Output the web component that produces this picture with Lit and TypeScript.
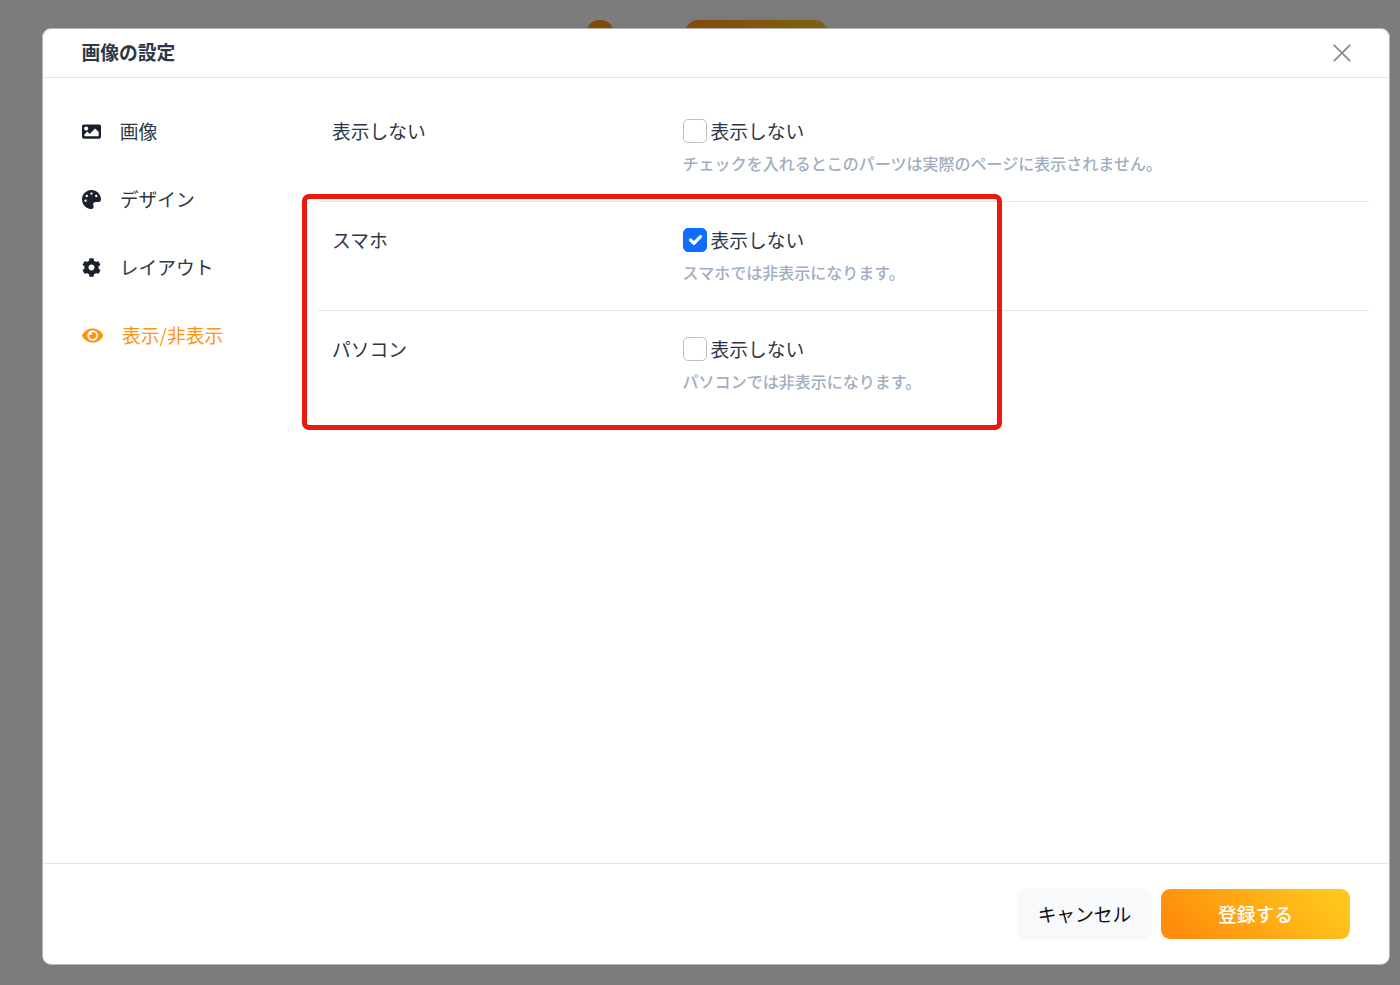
import { LitElement, html, css, svg } from "lit";
import { customElement, property, state } from "lit/decorators.js";
import { classMap } from "lit/directives/class-map.js";

interface NavItem {
  label: string;
  width: number;
  path: string;
  active?: boolean;
}

interface Setting {
  label: string;
  checked: boolean;
  help: string;
}

const NAV: NavItem[] = [
  {
    label: "画像",
    width: 512,
    path: "M464 448H48c-26.51 0-48-21.49-48-48V112c0-26.51 21.49-48 48-48h416c26.51 0 48 21.49 48 48v288c0 26.51-21.49 48-48 48zM112 120c-30.928 0-56 25.072-56 56s25.072 56 56 56 56-25.072 56-56-25.072-56-56-56zM64 384h384V272l-87.515-87.515c-4.686-4.686-12.284-4.686-16.971 0L208 320l-55.515-55.515c-4.686-4.686-12.284-4.686-16.971 0L64 336v48z",
  },
  {
    label: "デザイン",
    width: 512,
    path: "M204.3 5C104.9 24.4 24.8 104.3 5.2 203.4c-37 187 131.7 326.4 258.8 306.7 41.2-6.4 61.4-54.6 42.5-91.7-23.1-45.4 9.9-98.4 60.9-98.4h79.7c35.8 0 64.8-29.6 64.9-65.3C511.5 97.1 368.1-26.9 204.3 5zM96 320c-17.7 0-32-14.3-32-32s14.3-32 32-32 32 14.3 32 32-14.3 32-32 32zm32-128c-17.7 0-32-14.3-32-32s14.3-32 32-32 32 14.3 32 32-14.3 32-32 32zm128-64c-17.7 0-32-14.3-32-32s14.3-32 32-32 32 14.3 32 32-14.3 32-32 32zm128 64c-17.7 0-32-14.3-32-32s14.3-32 32-32 32 14.3 32 32-14.3 32-32 32z",
  },
  {
    label: "レイアウト",
    width: 512,
    path: "M487.4 315.7l-42.6-24.6c4.3-23.2 4.3-47 0-70.2l42.6-24.6c4.9-2.8 7.1-8.6 5.5-14-11.1-35.6-30-67.8-54.7-94.6-3.8-4.1-10-5.1-14.8-2.3L380.8 110c-17.9-15.4-38.5-27.3-60.8-35.1V25.8c0-5.6-3.9-10.5-9.4-11.7-36.7-8.2-74.3-7.8-109.2 0-5.5 1.2-9.4 6.1-9.4 11.7V75c-22.2 7.9-42.8 19.8-60.8 35.1L88.7 85.5c-4.9-2.8-11-1.9-14.8 2.3-24.7 26.7-43.6 58.9-54.7 94.6-1.7 5.4.6 11.2 5.5 14L67.3 221c-4.3 23.2-4.3 47 0 70.2l-42.6 24.6c-4.9 2.8-7.1 8.6-5.5 14 11.1 35.6 30 67.8 54.7 94.6 3.8 4.1 10 5.1 14.8 2.3l42.6-24.6c17.9 15.4 38.5 27.3 60.8 35.1v49.2c0 5.6 3.9 10.5 9.4 11.7 36.7 8.2 74.3 7.8 109.2 0 5.5-1.2 9.4-6.1 9.4-11.7v-49.2c22.2-7.9 42.8-19.8 60.8-35.1l42.6 24.6c4.9 2.8 11 1.9 14.8-2.3 24.7-26.7 43.6-58.9 54.7-94.6 1.5-5.5-.7-11.3-5.6-14.1zM256 336c-44.1 0-80-35.9-80-80s35.9-80 80-80 80 35.9 80 80-35.9 80-80 80z",
  },
  {
    label: "表示/非表示",
    width: 576,
    active: true,
    path: "M572.52 241.4C518.29 135.59 410.93 64 288 64S57.68 135.64 3.48 241.41a32.35 32.35 0 0 0 0 29.19C57.71 376.41 165.07 448 288 448s230.32-71.64 284.52-177.41a32.35 32.35 0 0 0 0-29.19zM288 400a144 144 0 1 1 144-144 143.93 143.93 0 0 1-144 144zm0-240a95.31 95.31 0 0 0-25.31 3.79 47.85 47.85 0 0 1-66.9 66.9A95.78 95.78 0 1 0 288 160z",
  },
];

@customElement("setting-row")
class SettingRow extends LitElement {
  @property({ attribute: false }) setting!: Setting;
  @state() private checked?: boolean;

  static styles = css`
    :host {
      display: grid;
      grid-template-columns: 350.6px 1fr;
      box-sizing: border-box;
      height: 108px;
      padding: 24px 14px 0;
    }
    .label,
    .check {
      line-height: 28px;
    }
    .check {
      display: flex;
      align-items: center;
      gap: 4px;
    }
    .box {
      display: flex;
      box-sizing: border-box;
      width: 24px;
      height: 24px;
      border: 1px solid #bfbfbf;
      border-radius: 5px;
      background: #fff;
    }
    .box.on {
      border-color: #0d6efd;
      background: #0d6efd;
    }
    .tick {
      width: 22px;
      height: 22px;
    }
    .help {
      margin-top: 5px;
      font-size: 16.03px;
      line-height: 26px;
      font-weight: 500;
      color: #a0aec0;
    }
  `;

  render() {
    const on = this.checked ?? this.setting.checked;
    return html`
      <div class="label">${this.setting.label}</div>
      <div>
        <div class="check" @click=${() => (this.checked = !on)}>
          <span class=${classMap({ box: true, on })}>
            ${on
              ? svg`<svg class="tick" viewBox="0 0 20 20"><path d="M6 10l3 3 6-6" fill="none" stroke="#fff" stroke-width="3" stroke-linecap="round" stroke-linejoin="round"/></svg>`
              : ""}
          </span>
          <span>表示しない</span>
        </div>
        <div class="help">${this.setting.help}</div>
      </div>
    `;
  }
}

@customElement("app-root")
class AppRoot extends LitElement {
  private settings: Setting[] = [
    { label: "表示しない", checked: false, help: "チェックを入れるとこのパーツは実際のページに表示されません。" },
    { label: "スマホ", checked: true, help: "スマホでは非表示になります。" },
    { label: "パソコン", checked: false, help: "パソコンでは非表示になります。" },
  ];

  static styles = css`
    :host {
      display: block;
      position: relative;
      box-sizing: border-box;
      width: 1400px;
      height: 985px;
      padding: 28px 10px 20px 42px;
      overflow: hidden;
      background: #7c7c7c;
      font-family: "Noto Sans CJK JP", sans-serif;
      font-size: 18.75px;
      color: #2d3748;
    }
    .dot,
    .pill {
      position: absolute;
      top: 20px;
      height: 27px;
      border-radius: 14px;
    }
    .dot {
      left: 586px;
      width: 28px;
      background: #834b08;
    }
    .pill {
      left: 685px;
      width: 143px;
      background: linear-gradient(90deg, #824a08, #80620e);
      box-shadow: 0 0 8px rgba(100, 105, 115, 0.3);
    }
    .modal {
      position: relative;
      display: flex;
      flex-direction: column;
      box-sizing: border-box;
      height: 937px;
      border: 1px solid #b5b5b5;
      border-radius: 9px;
      background: #fff;
    }
    .head {
      display: flex;
      align-items: center;
      justify-content: space-between;
      box-sizing: border-box;
      height: 49px;
      padding: 0 38px 0 38.6px;
      border-bottom: 1px solid #dfe5ec;
    }
    .title {
      font-size: 18.75px;
      line-height: 28px;
      font-weight: 700;
      margin: 0 0 2px;
    }
    .close {
      width: 18px;
      height: 18px;
      stroke: #8b8d91;
    }
    .body {
      flex: 1;
      display: grid;
      grid-template-columns: 275px 1fr;
      padding-right: 20px;
    }
    .nav {
      display: flex;
      flex-direction: column;
      gap: 40px;
      padding: 39px 0 0 38.7px;
    }
    .item {
      display: flex;
      align-items: center;
      gap: 19px;
      height: 28px;
      line-height: 28px;
    }
    .item.active {
      color: #ff930f;
    }
    .icon {
      height: 19px;
      fill: #1a202c;
    }
    .active .icon {
      fill: #ff930f;
    }
    .rows {
      padding-top: 15px;
    }
    .row + .row {
      border-top: 1px solid #e2e8f0;
      height: 109px;
    }
    .foot {
      display: flex;
      justify-content: flex-end;
      align-items: center;
      gap: 9px;
      box-sizing: border-box;
      height: 101px;
      padding-right: 39px;
      border-top: 1px solid #dfe5ec;
    }
    .btn {
      border: 0;
      border-radius: 9px;
      font: inherit;
      padding: 0 0 2px;
    }
    .cancel {
      width: 135px;
      height: 52px;
      background: #f7f9fb;
      color: #111;
    }
    .submit {
      width: 189px;
      height: 50px;
      background: linear-gradient(45deg, #ff8c0a 10%, #ffc71e 90%);
      color: #fff;
      font-weight: 500;
    }
    .mark {
      position: absolute;
      left: 302px;
      top: 194px;
      box-sizing: border-box;
      width: 700px;
      height: 236px;
      border: 5px solid #e9190c;
      border-radius: 7px;
      pointer-events: none;
    }
  `;

  render() {
    return html`
      <div class="dot"></div>
      <div class="pill"></div>
      <div class="modal">
        <div class="head">
          <h1 class="title">画像の設定</h1>
          <svg class="close" viewBox="0 0 18 18" fill="none" stroke-width="1.9" stroke-linecap="round">
            <path d="M1.3 1.3l15.4 15.4M16.7 1.3L1.3 16.7" />
          </svg>
        </div>
        <div class="body">
          <div class="nav">
            ${NAV.map(
              (n) => html`<div class=${classMap({ item: true, active: !!n.active })}>
                <svg class="icon" viewBox="0 0 ${n.width} 512"><path d=${n.path} /></svg>
                <span>${n.label}</span>
              </div>`,
            )}
          </div>
          <div class="rows">
            ${this.settings.map((s) => html`<setting-row class="row" .setting=${s}></setting-row>`)}
          </div>
        </div>
        <div class="foot">
          <button class="btn cancel">キャンセル</button>
          <button class="btn submit">登録する</button>
        </div>
      </div>
      <div class="mark"></div>
    `;
  }
}
